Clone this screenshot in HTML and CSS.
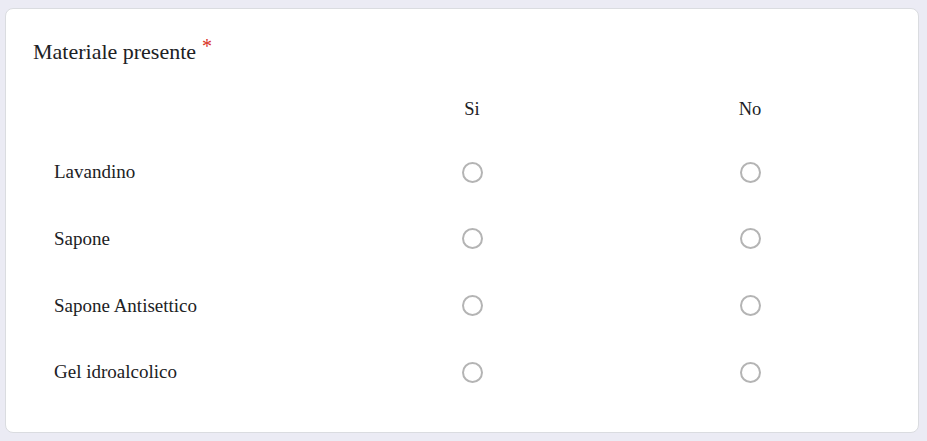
FILE: index.html
```html
<!DOCTYPE html>
<html lang="it">
<head>
  <meta charset="UTF-8" />
  <title>Materiale presente</title>
  <link rel="stylesheet" href="styles.css">
</head>
<body>
  <div class="card">
    <div class="title">Materiale presente<span class="required">*</span></div>

    <div class="grid">
      <div class="cell"></div>
      <div class="cell head">Si</div>
      <div class="cell head">No</div>

      <div class="cell label">Lavandino</div>
      <div class="cell"><span class="radio"></span></div>
      <div class="cell"><span class="radio"></span></div>

      <div class="cell label">Sapone</div>
      <div class="cell"><span class="radio"></span></div>
      <div class="cell"><span class="radio"></span></div>

      <div class="cell label">Sapone Antisettico</div>
      <div class="cell"><span class="radio"></span></div>
      <div class="cell"><span class="radio"></span></div>

      <div class="cell label">Gel idroalcolico</div>
      <div class="cell"><span class="radio"></span></div>
      <div class="cell"><span class="radio"></span></div>
    </div>
  </div>
</body>
</html>
```

FILE: styles.css
```css
body {
  margin: 0;
  padding: 8px 8px 8px 5px;
  background-color: #ebebf4;
  font-family: "Liberation Serif", "Times New Roman", serif;
  color: #202124;
}
.card {
  background-color: #fff;
  border: 1px solid #dadce0;
  border-radius: 8px;
  padding: 30px 28px 27px 27px;
  height: 425px;
  box-sizing: border-box;
}
.title {
  font-size: 22px;
  line-height: 26px;
}
.required {
  color: #d93025;
  font-size: 20px;
  line-height: 0;
  padding-left: 6px;
  vertical-align: 6px;
}
.grid {
  display: grid;
  grid-template-columns: 300px 278px 278px;
  grid-template-rows: 60px repeat(4, 66.67px);
  margin-top: 14px;
  font-size: 19px;
}
.head {
  font-size: 18.5px;
}
.cell {
  display: flex;
  align-items: center;
  justify-content: center;
}
.label {
  justify-content: flex-start;
  padding-left: 21px;
}
.radio {
  width: 21px;
  height: 21px;
  border: 2px solid #b4b4b4;
  border-radius: 50%;
  box-sizing: border-box;
}
```
